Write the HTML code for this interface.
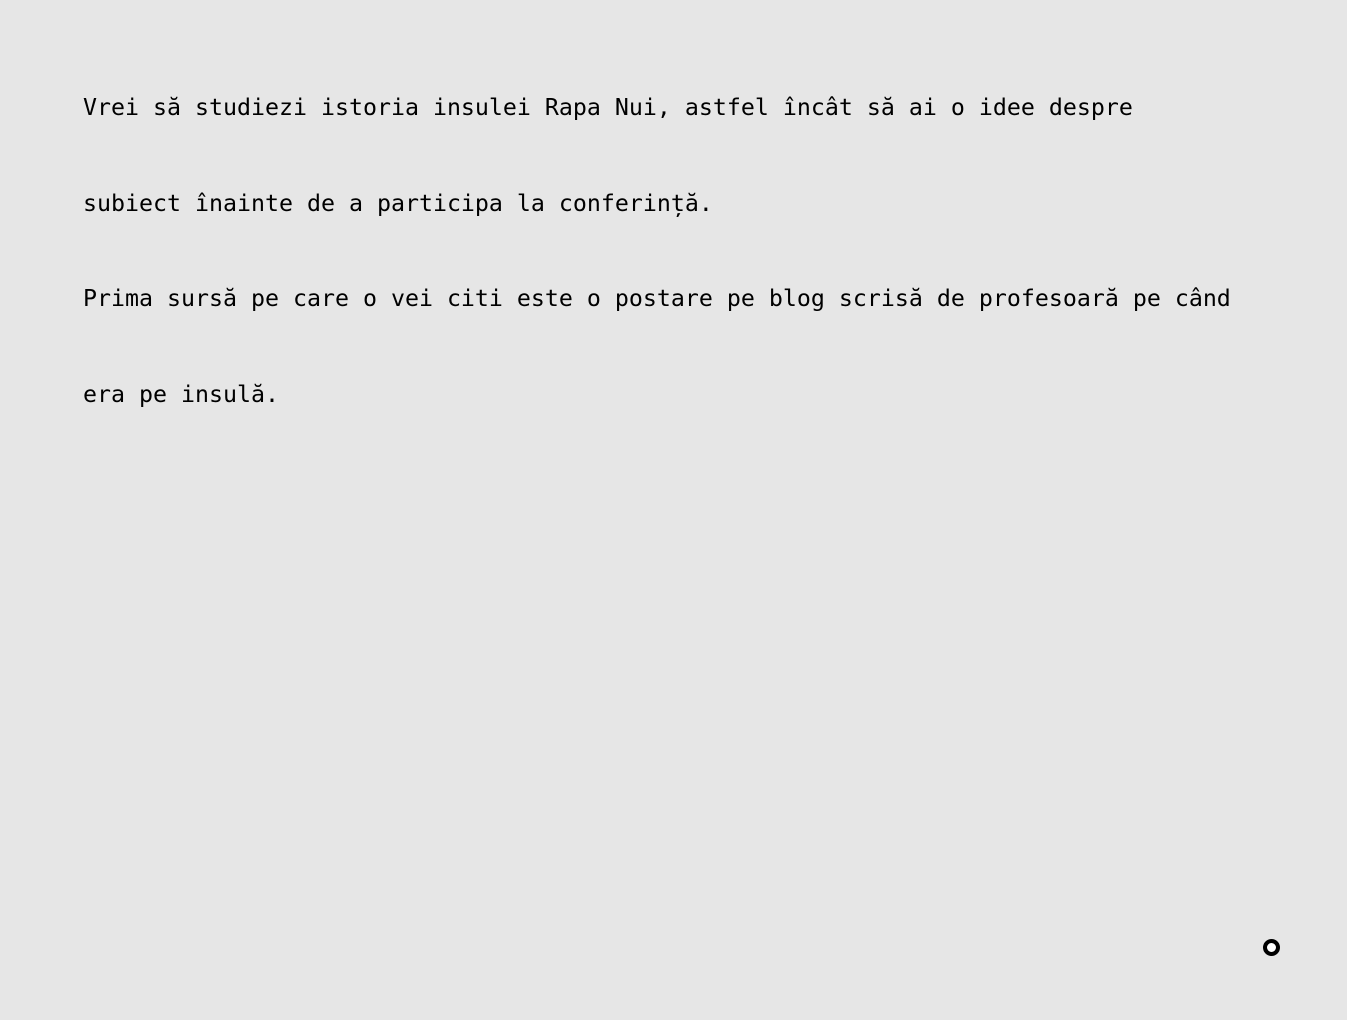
<!DOCTYPE html>
<html><head><meta charset="utf-8"><style>
html,body{margin:0;padding:0;background:#e6e6e6;width:1347px;height:1020px;overflow:hidden}
.t{position:absolute;left:83px;top:60px;font-family:"DejaVu Sans Mono",monospace;font-size:23.26px;line-height:95.7px;color:#000;white-space:pre;letter-spacing:0}
.c{position:absolute;left:1263px;top:939px;width:9px;height:9px;border:4px solid #000;border-radius:50%;background:#fff}
</style></head><body>
<div class="t">Vrei să studiezi istoria insulei Rapa Nui, astfel încât să ai o idee despre
subiect înainte de a participa la conferință.
Prima sursă pe care o vei citi este o postare pe blog scrisă de profesoară pe când
era pe insulă.</div>
<div class="c"></div>
</body></html>
